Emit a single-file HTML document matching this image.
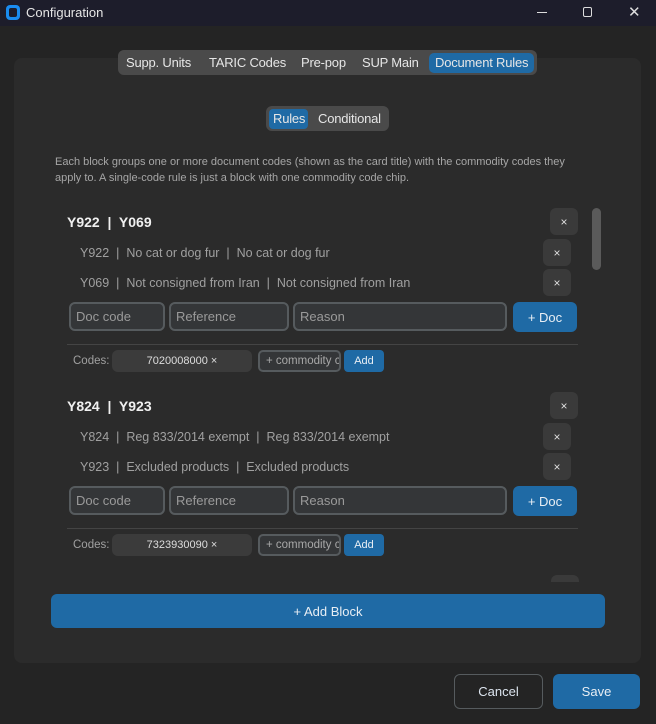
<!DOCTYPE html>
<html><head><style>
*{box-sizing:border-box;margin:0;padding:0}
body{width:656px;height:724px;background:#242424;font-family:"Liberation Sans",sans-serif;color:#dce4ee;position:relative;overflow:hidden}
.a{position:absolute}
.tb{left:0;top:0;width:656px;height:26px;background:#1d1d2b}
.btn{position:absolute;display:flex;align-items:center;justify-content:center;border-radius:6px}
.x{background:#3a3a3a;color:#ddd;font-size:12px;width:28px;height:27px}
.in{position:absolute;border:2px solid #565b5e;background:#343638;border-radius:6px;color:#9a9a9a;font-size:13px;padding:5px 5px;height:29px}
.ci{position:absolute;border:2px solid #565b5e;background:#343638;border-radius:5px;color:#a8a8a8;font-size:11.5px;height:22px;line-height:18px;padding:0 6px;overflow:hidden;white-space:nowrap}
.blue{background:#1f6aa5;color:#e8eef4}
.row{position:absolute;left:80px;font-size:12.5px;color:#a0a0a0}
.t{position:absolute;top:55px;font-size:13px;color:#e6e6e6;letter-spacing:-0.2px}
</style></head><body>
<div class="a tb"></div>
<div class="a" style="left:6px;top:5px;width:14px;height:15px;border-radius:4px;background:#1a8cf0"><div style="margin:3px 3px;width:8px;height:9px;border-radius:2px;background:#1d1d2b"></div></div>
<div class="a" style="left:26px;top:5px;font-size:13px;color:#e6e6e6">Configuration</div>
<div class="a" style="left:537px;top:12px;width:10px;height:1px;background:#ddd"></div>
<div class="a" style="left:583px;top:7px;width:9px;height:10px;border:1px solid #ddd;border-radius:2px"></div>
<div class="a" style="left:628px;top:3px;font-size:15px;color:#ddd">✕</div>

<div class="a" style="left:14px;top:58px;width:627px;height:605px;background:#2b2b2b;border-radius:8px"></div>

<div class="a" style="left:118px;top:50px;width:419px;height:25px;background:#4a4a4a;border-radius:6px"></div>
<div class="a" style="left:429px;top:53px;width:105px;height:20px;background:#1f6aa5;border-radius:5px"></div>
<div class="t" style="left:126px">Supp. Units</div>
<div class="t" style="left:209px">TARIC Codes</div>
<div class="t" style="left:301px">Pre-pop</div>
<div class="t" style="left:362px">SUP Main</div>
<div class="t" style="left:435px">Document Rules</div>

<div class="a" style="left:266px;top:106px;width:123px;height:25px;background:#4a4a4a;border-radius:6px"></div>
<div class="a" style="left:269px;top:109px;width:39px;height:20px;background:#1f6aa5;border-radius:4px"></div>
<div class="t" style="top:111px;left:273px">Rules</div>
<div class="t" style="top:111px;left:318px">Conditional</div>

<div class="a" style="left:55px;top:154px;width:530px;font-size:11px;line-height:16px;color:#a6a6a6">Each block groups one or more document codes (shown as the card title) with the commodity codes they apply to. A single-code rule is just a block with one commodity code chip.</div>

<div class="a" style="left:592px;top:208px;width:9px;height:62px;background:#5a5a5a;border-radius:5px"></div>

<!-- block 1 -->
<div class="a" style="left:67px;top:214px;font-size:14px;font-weight:bold;color:#f0f0f0">Y922&nbsp; |&nbsp; Y069</div>
<div class="btn x" style="left:550px;top:208px">×</div>
<div class="row" style="top:246px">Y922&nbsp; |&nbsp; No cat or dog fur&nbsp; |&nbsp; No cat or dog fur</div>
<div class="btn x" style="left:543px;top:239px">×</div>
<div class="row" style="top:276px">Y069&nbsp; |&nbsp; Not consigned from Iran&nbsp; |&nbsp; Not consigned from Iran</div>
<div class="btn x" style="left:543px;top:269px">×</div>
<div class="in" style="left:69px;top:302px;width:96px">Doc code</div>
<div class="in" style="left:169px;top:302px;width:120px">Reference</div>
<div class="in" style="left:293px;top:302px;width:214px">Reason</div>
<div class="btn blue" style="left:513px;top:302px;width:64px;height:30px;font-size:13px">+ Doc</div>
<div class="a" style="left:67px;top:344px;width:511px;height:1px;background:#444"></div>
<div class="a" style="left:73px;top:355px;font-size:11.5px;color:#a0a0a0">Codes:</div>
<div class="btn" style="left:112px;top:350px;width:140px;height:22px;background:#3b3b3b;font-size:11px;color:#ddd">7020008000 ×</div>
<div class="ci" style="left:258px;top:350px;width:83px">+ commodity c</div>
<div class="btn blue" style="left:344px;top:350px;width:40px;height:22px;font-size:11px;border-radius:4px">Add</div>

<!-- block 2 -->
<div class="a" style="left:67px;top:398px;font-size:14px;font-weight:bold;color:#f0f0f0">Y824&nbsp; |&nbsp; Y923</div>
<div class="btn x" style="left:550px;top:392px">×</div>
<div class="row" style="top:430px">Y824&nbsp; |&nbsp; Reg 833/2014 exempt&nbsp; |&nbsp; Reg 833/2014 exempt</div>
<div class="btn x" style="left:543px;top:423px">×</div>
<div class="row" style="top:460px">Y923&nbsp; |&nbsp; Excluded products&nbsp; |&nbsp; Excluded products</div>
<div class="btn x" style="left:543px;top:453px">×</div>
<div class="in" style="left:69px;top:486px;width:96px">Doc code</div>
<div class="in" style="left:169px;top:486px;width:120px">Reference</div>
<div class="in" style="left:293px;top:486px;width:214px">Reason</div>
<div class="btn blue" style="left:513px;top:486px;width:64px;height:30px;font-size:13px">+ Doc</div>
<div class="a" style="left:67px;top:528px;width:511px;height:1px;background:#444"></div>
<div class="a" style="left:73px;top:539px;font-size:11.5px;color:#a0a0a0">Codes:</div>
<div class="btn" style="left:112px;top:534px;width:140px;height:22px;background:#3b3b3b;font-size:11px;color:#ddd">7323930090 ×</div>
<div class="ci" style="left:258px;top:534px;width:83px">+ commodity c</div>
<div class="btn blue" style="left:344px;top:534px;width:40px;height:22px;font-size:11px;border-radius:4px">Add</div>

<div class="a" style="left:551px;top:575px;width:28px;height:7px;background:#3a3a3a;border-radius:6px 6px 0 0"></div>

<div class="btn blue" style="left:51px;top:594px;width:554px;height:34px;font-size:13px">+ Add Block</div>

<div class="btn" style="left:454px;top:674px;width:89px;height:35px;border:1px solid #565b5e;font-size:13px;color:#dce4ee">Cancel</div>
<div class="btn blue" style="left:553px;top:674px;width:87px;height:35px;font-size:13px">Save</div>
</body></html>
